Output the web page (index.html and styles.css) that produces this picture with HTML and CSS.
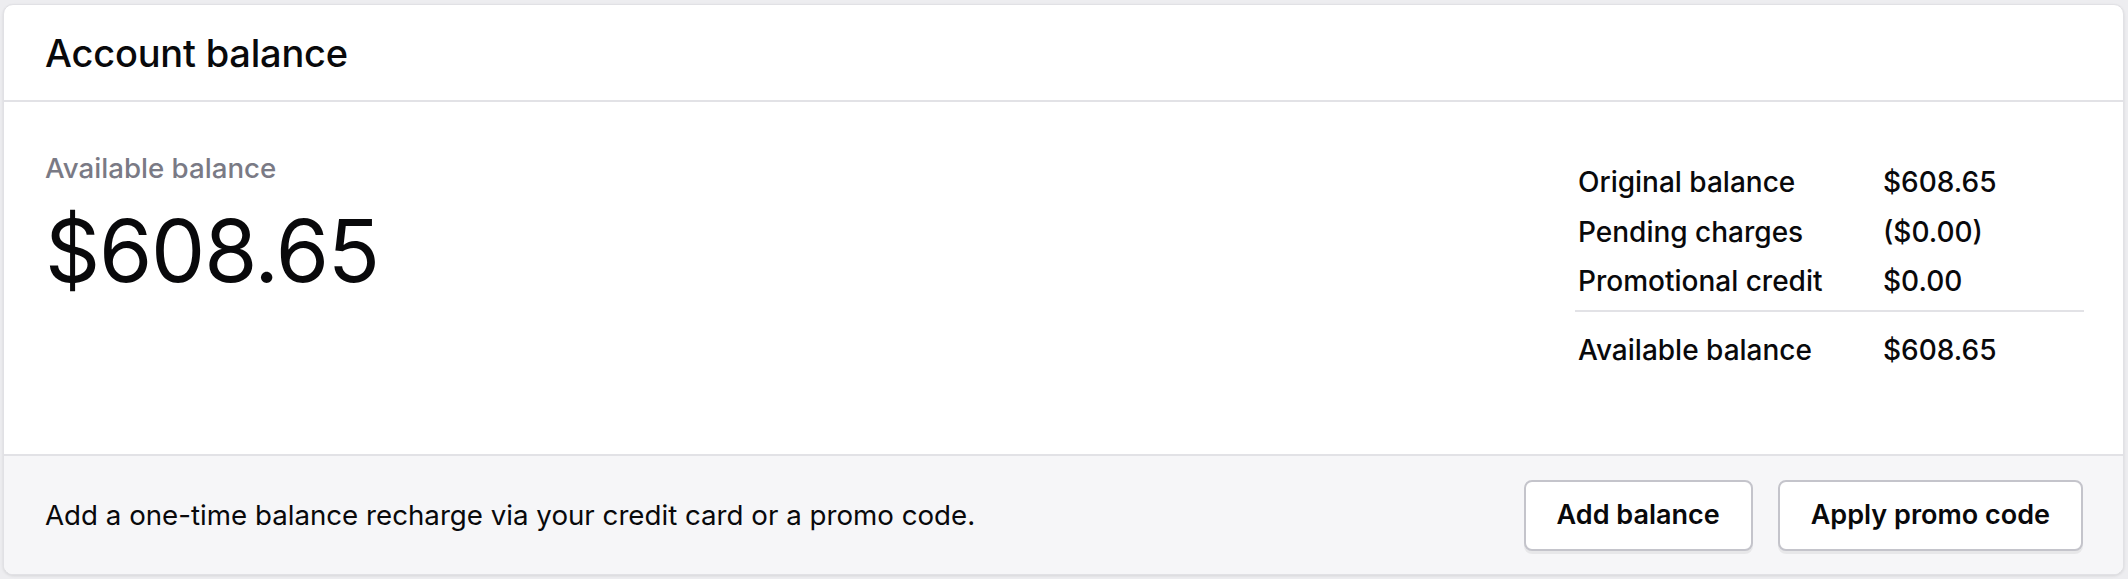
FILE: index.html
```html
<!DOCTYPE html>
<html lang="en">
<head>
<meta charset="utf-8">
<title>Account balance</title>
<link rel="stylesheet" href="styles.css">
</head>
<body>
<section class="card">
  <header class="card-header">
    <h2 class="card-title">Account balance</h2>
  </header>
  <div class="card-body">
    <div class="available">
      <div class="available-label">Available balance</div>
      <div class="available-amount">$608.65</div>
    </div>
    <dl class="breakdown">
      <dt class="bd-label">Original balance</dt><dd class="bd-value">$608.65</dd>
      <dt class="bd-label">Pending charges</dt><dd class="bd-value">($0.00)</dd>
      <dt class="bd-label">Promotional credit</dt><dd class="bd-value">$0.00</dd>
      <dt class="bd-label bd-total">Available balance</dt><dd class="bd-value bd-total">$608.65</dd>
    </dl>
  </div>
  <footer class="card-footer">
    <p class="footer-text">Add a one-time balance recharge via your credit card or a promo code.</p>
    <div class="actions">
      <button class="btn" type="button">Add balance</button>
      <button class="btn" type="button">Apply promo code</button>
    </div>
  </footer>
</section>
</body>
</html>
```
FILE: styles.css
```css
* { box-sizing: border-box; }
html, body { height: 100%; }
body {
  margin: 0;
  padding: 4px 4px 4px 3px;
  background: #ededf0;
  font-family: Inter, "Noto Sans", sans-serif;
  color: #09090b;
}
.card {
  background: #ffffff;
  border: 1px solid #e1e1e5;
  border-radius: 10px;
  box-shadow: 0 1px 3px rgba(0,0,0,0.10);
  overflow: hidden;
  display: flex;
  flex-direction: column;
  height: 571px;
}
.card-header {
  height: 97px;
  border-bottom: 2px solid #e2e2e6;
  display: flex;
  align-items: center;
  padding: 0 41px;
}
.card-title {
  margin: 0;
  font-size: 38px;
  font-weight: 500;
  letter-spacing: -0.2px;
  line-height: 44px;
}
.card-body {
  flex: 1;
  display: flex;
  justify-content: space-between;
  align-items: flex-start;
  padding: 0 39px 0 41px;
}
.available {
  padding-top: 46px;
}
.available-label {
  font-size: 27.7px;
  line-height: 40px;
  color: #7a7a85;
  font-weight: 500;
}
.available-amount {
  font-size: 86px;
  line-height: 100px;
  font-weight: 400;
  letter-spacing: -1.2px;
  margin-top: 13px;
}
.breakdown {
  margin: 56px 0 0;
  width: 509px;
  display: grid;
  grid-template-columns: 305px 1fr;
  font-size: 28px;
  font-weight: 500;
  line-height: 49.5px;
}
.bd-label, .bd-value {
  margin: 0;
  padding: 0 3px;
  white-space: nowrap;
}
.bd-value:nth-of-type(3) { padding-bottom: 3px; }
.bd-label:nth-of-type(3) { padding-bottom: 3px; }
.bd-total {
  border-top: 2px solid #e2e2e6;
  padding-top: 14px;
}
.card-footer {
  height: 120px;
  background: #f6f6f8;
  border-top: 2px solid #e2e2e6;
  display: flex;
  align-items: center;
  justify-content: space-between;
  padding: 0 40px 0 41px;
}
.footer-text {
  margin: 0;
  font-size: 27.7px;
  line-height: 40px;
}
.actions {
  display: flex;
  gap: 25px;
}
.btn {
  font-family: inherit;
  font-size: 27px;
  font-weight: 600;
  color: #09090b;
  background: #ffffff;
  border: 2px solid #c4c4cb;
  border-radius: 8px;
  height: 71px;
  padding: 0 31px;
  box-shadow: 0 3px 0 rgba(0,0,0,0.06);
  line-height: 40px;
}
```
